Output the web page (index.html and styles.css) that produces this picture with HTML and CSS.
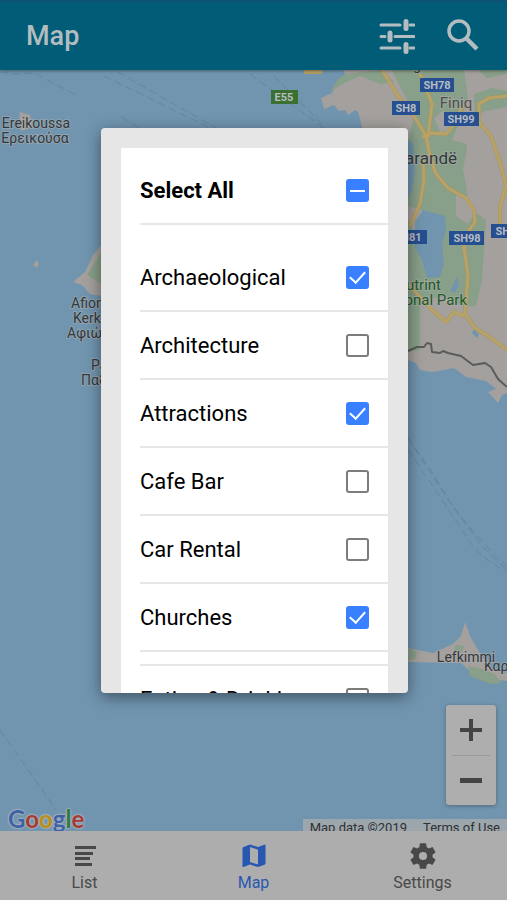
FILE: index.html
```html
<!DOCTYPE html>
<html lang="en">
<head>
<meta charset="utf-8">
<meta name="viewport" content="width=device-width, initial-scale=1">
<title>Map</title>
<link rel="stylesheet" href="styles.css">
</head>
<body>
<div class="app">
  <header class="toolbar">
    <h1 class="toolbar-title">Map</h1>
    <button class="tool" type="button" aria-label="Filter">
      <svg width="36" height="36" viewBox="0 0 36 36" fill="none" stroke="currentColor" stroke-linecap="round">
        <path stroke-width="3" d="M2 7h19M31 7h4M2 18.500h4M16 18.500h19M2 30h19M31 30h4"/>
        <path stroke-width="5" d="M27 3.500v7M11 15v7M27 26.500v7"/>
      </svg>
    </button>
    <button class="tool" type="button" aria-label="Search">
      <svg width="36" height="36" viewBox="0 0 36 36" fill="none" stroke="currentColor">
        <circle cx="14" cy="13" r="10" stroke-width="3.500"/>
        <path stroke-width="4.500" d="M21 20l11 11"/>
      </svg>
    </button>
  </header>

  <main class="map">
    <svg class="map-canvas" viewBox="0 70 507 761" preserveAspectRatio="xMidYMid slice">
      <rect class="water" y="70" width="507" height="761"/>
      <g class="ferry">
        <path d="M0 72l14 2 20-1 42 22M104 76l110 54M118 72l98 56M122 117l20 13M250 74l75 55M274 76l50 50M0 730l48 68 8 12"/>
        <path d="M408 438l20 28 22 36 20 26 20 22 17 16M408 450l22 32 24 36 20 30 16 14 17 10M408 438l26 40 24 36 24 32 25 24"/>
      </g>
      <g class="land">
        <path d="M343 70l4 8-9 3-6 12-11 5 3 11 10-4 5 6 6-1 3 5 7-5 3 2 5 18 45 10v220l8 3 4 7 12 2 22-4 12 9 20 4 10 8-8 3 10 11 4-8 5-2 6 2V70z"/>
        <path d="M101 245l-8 10-8 17-12 10 9 3 8 9 11 2z"/>
        <path d="M20 112l10 3 3 12-12 4-2-9zM37 260l2 4-2 4-4-3z"/>
        <path d="M408 648l25 5 20-9 8-8 4-14 6 16 10 17 12 14 14 4v8l-30-4-16-14-53-1z"/>
      </g>
      <g class="green">
        <path d="M330 92l8-13 8-5 36-4 12 12-14 2-20-8-18 8zM392 70h72l4 30-16 40 14 4 8 30-8 24-6 42-18-24-34-10v-62l6-30z"/>
        <path d="M478 70h29v4l-20 4zM474 94l18-6 15 3v16l-22 4-10 6zM408 220l12 24 28-28 18-10 20 14-4 60-6 26h-14l-16-10-26 4v50l-12 2z"/>
        <path d="M101 253l-14 22 14 9zM409 648l8 4-2 7-7 1zM456 645l8 1-2 6-8-1zM468 666l14 3 12 5 8 9-12 1-20-8z"/>
      </g>
      <path class="land" d="M468 144l12 7 12 24 5 20-8 16-20-8-6-34zM456 192l14 6 6 14-8 12-12-8zM434 118l10-8 8 16-10 10z"/>
      <path class="water" d="M408 140l5 3 2 26-3 22-4 8zM415 222l8-12 22 6 1 14-4 14 2 20-4 13-13 1-5-18-7-12zM457 277l2 8-4 8-5-2zM474 329l5 5-2 4-5-5z"/>
      <g class="road-edge">
        <path d="M382 70l16 26 16 20 12 20 4 20 6 18 12 14 18 10 8 12 1 12-10 14-1 10 4 30-3 38 10 14 16 10 16 12M422 137l10-4 14 1 9-10 8-20M420 74l12 30-4 33M423 160l1 20-4 24-10 22M507 96l-18 2-10 6v18l12 14 10 30 5 20-6 20v26M408 284l22 24 16 14 8-10 10 4M304 72h18"/>
      </g>
      <g class="road">
        <path d="M382 70l16 26 16 20 12 20 4 20 6 18 12 14 18 10 8 12 1 12-10 14-1 10 4 30-3 38 10 14 16 10 16 12M422 137l10-4 14 1 9-10 8-20M420 74l12 30-4 33M423 160l1 20-4 24-10 22M507 96l-18 2-10 6v18l12 14 10 30 5 20-6 20v26M408 284l22 24 16 14 8-10 10 4M304 72h18"/>
      </g>
      <path class="border-line" d="M408 351l9-4h7l3-4 4 1 1 8 8 1 3-2 5 2 13 3 12 9 12-2 6 4 7 12 9 8"/>
      <g class="shield">
        <rect x="420" y="78" width="34" height="14"/><rect x="392" y="101" width="28" height="14"/>
        <rect x="444" y="112" width="35" height="14"/><rect x="392" y="230" width="35" height="14"/>
        <rect x="449" y="231" width="35" height="14"/><rect x="491" y="224" width="34" height="14"/>
      </g>
      <rect class="shield-e" x="271" y="90" width="27" height="14"/>
      <g class="shield-text">
        <text x="437" y="89">SH78</text><text x="406" y="112">SH8</text><text x="461" y="123">SH99</text>
        <text x="408" y="241">SH81</text><text x="467" y="242">SH98</text><text x="509" y="235">SH97</text>
        <text x="284" y="101">E55</text>
      </g>
      <g class="place">
        <text x="36" y="128">Ereikoussa</text><text x="35" y="143">Ερεικούσα</text>
        <text x="71" y="308" class="start">Afionas</text><text x="73" y="323" class="start">Kerkyra</text><text x="67" y="338" class="start">Αφιώνας</text>
        <text x="91" y="370" class="start">Paxi</text><text x="81" y="385" class="start">Παξοί</text>
        <text x="456" y="108" class="faint">Finiq</text><text x="417" y="70">g</text>
        <text x="457" y="164" class="town end">Sarandë</text>
        <text x="484" y="671" class="start">Καρ</text>
        <text x="466" y="662">Lefkimmi</text>
      </g>
      <g class="park"><text x="441" y="290" class="end">Butrint</text><text x="467" y="305" class="end">National Park</text></g>
    </svg>
    <div class="zoom">
      <button type="button" aria-label="Zoom in"><svg width="24" height="24" viewBox="0 0 24 24"><path d="M10 1h4v9h9v4h-9v9h-4v-9H1v-4h9z"/></svg></button>
      <button type="button" aria-label="Zoom out"><svg width="24" height="24" viewBox="0 0 24 24"><path d="M1 9h22v5H1z"/></svg></button>
    </div>
    <div class="google" aria-label="Google"><span class="b">G</span><span class="r">o</span><span class="y">o</span><span class="b">g</span><span class="g">l</span><span class="r">e</span></div>
    <div class="credits"><span>Map data ©2019</span><a href="#terms">Terms of Use</a></div>
  </main>

  <nav class="tabs">
    <a class="tab" href="#list">
      <svg width="28" height="28" viewBox="0 0 28 28"><path d="M4 4h21v3H4zM4 10h18v3H4zM4 15h15v3H4zM4 21h17v3H4z"/></svg>
      <span>List</span>
    </a>
    <a class="tab active" href="#map" aria-current="page">
      <svg width="28" height="28" viewBox="0 0 28 28"><path fill-rule="evenodd" d="M25 2.500l-7 2.500-8-2.500-6.500 2.500q-1 .3-1 1.200v18.300q.2.700 1 .5l6.500-2.500 8 2.500 6.500-2.200q1-.3 1-1.200V3.200q-.1-.7-.5-.7zM10 5l8 2.700V22.500L10 20z"/></svg>
      <span>Map</span>
    </a>
    <a class="tab" href="#settings">
      <svg width="28" height="28" viewBox="1 1 22 22"><path d="M19.430 12.980c.04-.32.07-.64.07-.98s-.03-.66-.07-.98l2.110-1.650c.19-.15.24-.42.12-.64l-2-3.460c-.12-.22-.39-.3-.61-.22l-2.490 1c-.52-.4-1.080-.73-1.690-.98l-.38-2.650C14.460 2.180 14.250 2 14 2h-4c-.25 0-.46.18-.49.42l-.38 2.650c-.61.25-1.170.59-1.690.98l-2.490-1c-.23-.09-.49 0-.61.22l-2 3.460c-.13.22-.07.49.12.64l2.110 1.650c-.04.32-.07.65-.07.98s.03.66.07.98l-2.110 1.650c-.19.15-.24.42-.12.64l2 3.460c.12.22.39.3.61.22l2.490-1c.52.4 1.080.73 1.690.98l.38 2.650c.03.24.24.42.49.42h4c.25 0 .46-.18.49-.42l.38-2.650c.61-.25 1.170-.59 1.690-.98l2.490 1c.23.09.49 0 .61-.22l2-3.460c.12-.22.07-.49-.12-.64l-2.110-1.650zM12 15.200a3.200 3.200 0 1 1 0-6.400 3.200 3.200 0 0 1 0 6.400z"/></svg>
      <span>Settings</span>
    </a>
  </nav>
</div>

<div class="overlay">
  <section class="dialog" role="dialog" aria-label="Categories">
    <div class="sheet">
      <label class="row all"><span>Select All</span><input class="check partial" type="checkbox"></label>
      <div class="list">
        <label class="row"><span>Archaeological</span><input class="check" type="checkbox" checked></label>
        <label class="row"><span>Architecture</span><input class="check" type="checkbox"></label>
        <label class="row"><span>Attractions</span><input class="check" type="checkbox" checked></label>
        <label class="row"><span>Cafe Bar</span><input class="check" type="checkbox"></label>
        <label class="row"><span>Car Rental</span><input class="check" type="checkbox"></label>
        <label class="row"><span>Churches</span><input class="check" type="checkbox" checked></label>
      </div>
      <div class="list next">
        <label class="row"><span>Eating &amp; Drinking</span><input class="check" type="checkbox"></label>
      </div>
    </div>
  </section>
</div>
</body>
</html>
```

FILE: styles.css
```css
* { box-sizing: border-box; }

body {
  margin: 0;
  font-family: Roboto, "Noto Sans", sans-serif;
  color: #000;
}

button {
  padding: 0;
  border: 0;
  background: none;
  color: inherit;
  font: inherit;
}

.app {
  display: flex;
  flex-direction: column;
  height: 100vh;
}

.toolbar {
  position: relative;
  display: flex;
  align-items: center;
  gap: 30px;
  height: 70px;
  padding: 0 26px;
  background: #005c77;
  border-top: 2px solid #0b5274;
  color: #b3bcc0;
  box-shadow: 0 1px 3px rgba(0, 0, 0, 0.4);
  z-index: 1;
}

.toolbar-title {
  flex: 1;
  margin: 0;
  font-size: 27px;
  line-height: 32px;
  font-weight: 500;
}

.tool { display: flex; }

.map {
  position: relative;
  flex: 1;
  min-height: 0;
  overflow: hidden;
  background: #7195af;
}

.map-canvas {
  display: block;
  width: 100%;
  height: 100%;
}

.water { fill: #7195af; }
.land { fill: #a3a09d; }
.green { fill: #889f89; }
.ferry { fill: none; stroke: #6485a2; stroke-width: 1; stroke-dasharray: 8 4; }
.road-edge, .road { fill: none; stroke-linejoin: round; }
.road-edge { stroke: #a8955f; stroke-width: 4; }
.road { stroke: #b7a368; stroke-width: 3; }
.border-line { fill: none; stroke: #5c5b59; stroke-width: 2; stroke-linejoin: round; }
.shield { fill: #254f91; }
.shield-e { fill: #3a7030; }

.shield-text {
  fill: #b8bcc2;
  font-size: 11px;
  font-weight: 700;
  text-anchor: middle;
}

.place, .park {
  font-size: 14px;
  text-anchor: middle;
  paint-order: stroke;
  stroke: rgba(175, 175, 175, 0.5);
  stroke-width: 2px;
}

.place { fill: #34383b; }
.park { fill: #1f5b28; font-size: 15px; }
.faint { fill: #4f4e4c; font-size: 15px; }
.town { font-size: 17px; }
.start { text-anchor: start; }
.end { text-anchor: end; }

.zoom {
  position: absolute;
  right: 11px;
  bottom: 26px;
  width: 50px;
  padding: 0 6px;
  background: #aeaeae;
  border-radius: 3px;
  box-shadow: 0 1px 4px rgba(0, 0, 0, 0.3);
}

.zoom button {
  display: flex;
  align-items: center;
  justify-content: center;
  width: 100%;
  height: 50px;
  fill: #444;
}

.zoom button + button { border-top: 1px solid #999; }

.google {
  position: absolute;
  left: 8px;
  bottom: -4px;
  font-family: Lato, sans-serif;
  font-size: 24px;
  line-height: 32px;
  font-weight: 700;
  text-shadow: 0 0 2px #b5b9bc, 0 0 2px #b5b9bc, 0 0 2px #b5b9bc;
}

.b { color: #3d62a8; }
.r { color: #a63a35; }
.y { color: #b98f17; }
.g { color: #2f7a45; }

.credits {
  position: absolute;
  right: 0;
  bottom: -6px;
  display: flex;
  gap: 16px;
  padding: 0 7px;
  background: #9ca6ad;
  color: #303030;
  font-size: 13px;
  line-height: 18px;
}

.credits a { color: inherit; text-decoration: none; }

.tabs {
  position: relative;
  display: grid;
  grid-template-columns: repeat(3, 1fr);
  height: 69px;
  background: #adadad;
}

.tab {
  display: flex;
  flex-direction: column;
  align-items: center;
  gap: 3px;
  padding-top: 11px;
  color: #484848;
  fill: currentColor;
  font-size: 16px;
  line-height: 20px;
  text-decoration: none;
}

.tab.active { color: #2857b2; }

.overlay {
  position: fixed;
  inset: 0;
  display: flex;
  padding: 128px 99px 207px 101px;
  z-index: 2;
}

.dialog {
  flex: 1;
  min-width: 0;
  padding: 20px 20px 0;
  overflow: hidden;
  background: #e6e6e6;
  border-radius: 4px;
  box-shadow: 0 4px 16px rgba(0, 0, 0, 0.45);
}

.sheet {
  padding-left: 19px;
  background: #fff;
}

.row {
  display: flex;
  align-items: center;
  justify-content: space-between;
  height: 68px;
  padding-right: 19px;
  border-bottom: 2px solid #e7e7e7;
  font-size: 22px;
}

.all {
  height: 77px;
  padding-top: 10px;
  font-weight: 700;
}

.list { padding-top: 19px; }

.next {
  margin-top: 12px;
  padding-top: 0;
  border-top: 2px solid #e7e7e7;
}

.check {
  appearance: none;
  display: grid;
  place-items: center;
  width: 23px;
  height: 23px;
  margin: 0;
  border: 2px solid #7c7c7c;
  border-radius: 3px;
}

.check:checked, .partial {
  background: #3880ff;
  border-color: #3880ff;
}

.check:checked::before {
  content: "";
  width: 7px;
  height: 13px;
  margin-bottom: 4px;
  border: solid #fff;
  border-width: 0 2px 2px 0;
  transform: rotate(42deg);
}

.partial::before {
  content: "";
  width: 15px;
  height: 2px;
  background: #fff;
}
```
